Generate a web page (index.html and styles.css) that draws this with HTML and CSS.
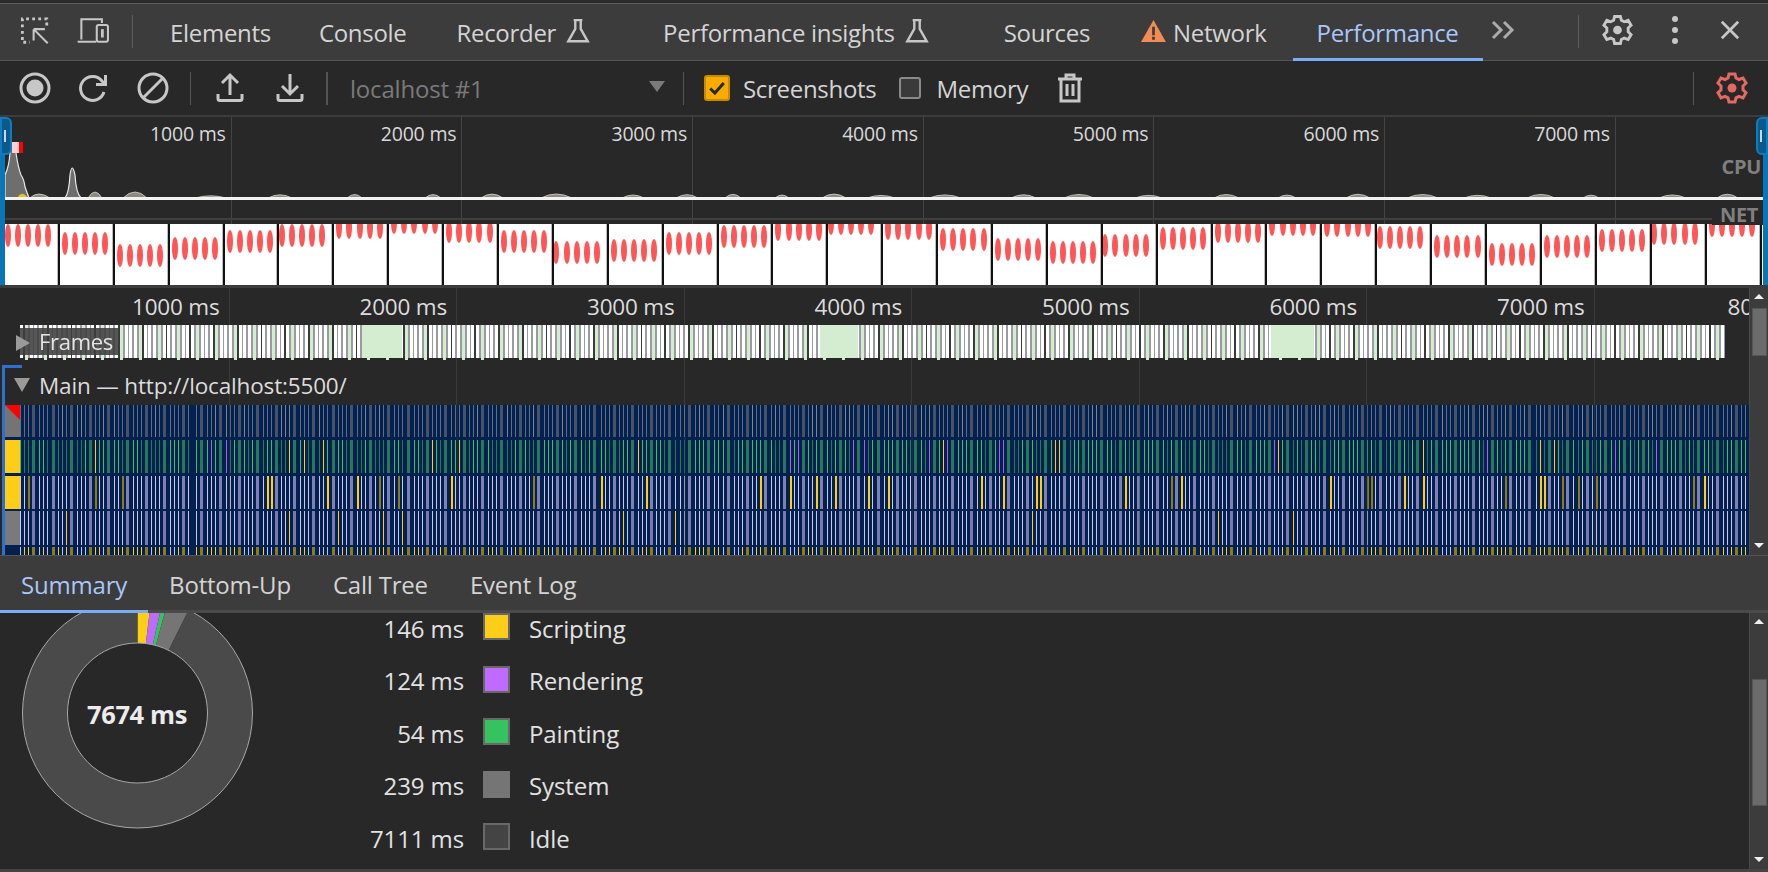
FILE: index.html
```html
<!DOCTYPE html>
<html lang="en">
<head>
<meta charset="utf-8">
<title>DevTools Performance</title>
<link rel="stylesheet" href="styles.css">
</head>
<body>
<div class="app">
  <header class="tabbar">
    <svg class="ico ico-inspect" viewBox="0 0 32 32"><path class="dash" d="M2 12V3h26v9M2 16v12h8"/><path class="ln" d="M14 14h12M14 14v12M14 14l15 15"/></svg>
    <svg class="ico ico-device" viewBox="0 0 36 30"><path class="ln" d="M5 24V2.500h22v4M1 26.500h20"/><rect class="ln" x="21.500" y="8.500" width="12" height="18" rx="2"/><path class="ln thick" d="M27.500 13v9"/></svg>
    <span class="vsep vsep-a"></span>
    <nav class="tabs">
      <span class="tab">Elements</span>
      <span class="tab tab-console">Console</span>
      <span class="tab">Recorder<svg class="flask" viewBox="0 0 24 24"><path class="ln" d="M8 2h8M9.500 2v8L3 21.500h18L14.500 10V2"/></svg></span>
      <span class="tab tab-pi">Performance insights<svg class="flask" viewBox="0 0 24 24"><path class="ln" d="M8 2h8M9.500 2v8L3 21.500h18L14.500 10V2"/></svg></span>
      <span class="tab tab-sources">Sources</span>
      <span class="tab tab-net"><svg class="warn" viewBox="0 0 28 25"><path class="warn-tri" d="M14 1L27 24H1z"/><path class="warn-bang" d="M12.600 8h2.800v9h-2.800zM12.600 18.500h2.800v3h-2.800z"/></svg>Network</span>
      <span class="tab tab-active">Performance</span>
    </nav>
    <svg class="ico ico-more" viewBox="0 0 26 20"><path class="ln thick" d="M2 2l8 8-8 8M13 2l8 8-8 8"/></svg>
    <span class="vsep vsep-b"></span>
    <svg class="ico ico-gear" viewBox="0 0 32 32"><path class="ln thick" d="M13 2h6l1 4 3 1.500 4-1.500 3 5-3 3v3.800l3 3-3 5-4-1.500-3 1.500-1 4.200h-6l-1-4.200-3-1.500-4 1.500-3-5 3-3v-3.800l-3-3 3-5 4 1.500L12 6z"/><circle class="fill-g" cx="16" cy="16" r="4.500"/></svg>
    <span class="kebab"><i></i><i></i><i></i></span>
    <svg class="ico ico-close" viewBox="0 0 22 22"><path class="ln thick" d="M2 2l18 18M20 2L2 20"/></svg>
  </header>

  <section class="toolbar">
    <svg class="tool tool-rec" viewBox="0 0 32 32"><circle class="ln thick" cx="16" cy="16" r="14"/><circle class="fill-g" cx="16" cy="16" r="8.500"/></svg>
    <svg class="tool" viewBox="0 0 32 32"><path class="ln thick" d="M26 20a12 12 0 1 1-2-11l3 3M27.500 3v9.500H18"/></svg>
    <svg class="tool" viewBox="0 0 32 32"><circle class="ln thick" cx="16" cy="16" r="14"/><path class="ln thick" d="M6.500 25.500l19-19"/></svg>
    <span class="tsep tsep-a"></span>
    <svg class="tool tool-up" viewBox="0 0 30 32"><path class="ln thick" d="M15 23V3M7 11l8-8 8 8M3 22v4.500a2 2 0 0 0 2 2h20a2 2 0 0 0 2-2V22"/></svg>
    <svg class="tool tool-down" viewBox="0 0 30 32"><path class="ln thick" d="M15 2v20M7 14l8 8 8-8M3 22v4.500a2 2 0 0 0 2 2h20a2 2 0 0 0 2-2V22"/></svg>
    <span class="tsep tsep-b"></span>
    <span class="target">localhost #1</span>
    <span class="caret"></span>
    <span class="tsep tsep-c"></span>
    <span class="check check-on"><svg viewBox="0 0 26 26"><path class="tick" d="M5 13.500l5.500 5.500L21 7"/></svg></span>
    <span class="check-label">Screenshots</span>
    <span class="check check-off"></span>
    <span class="check-label check-label-mem">Memory</span>
    <svg class="tool tool-trash" viewBox="0 0 26 30"><path class="ln thick" d="M1 6h24M9 6V2h8v4M4 6v22h18V6M10 11v12M16 11v12"/></svg>
    <span class="tsep tsep-d"></span>
    <svg class="tool tool-capture" viewBox="0 0 32 32"><path class="ln-red" d="M13 2h6l1 4 3 1.500 4-1.500 3 5-3 3v3.800l3 3-3 5-4-1.500-3 1.500-1 4.200h-6l-1-4.200-3-1.500-4 1.500-3-5 3-3v-3.800l-3-3 3-5 4 1.500L12 6z"/><circle class="fill-r" cx="16" cy="16" r="4.500"/></svg>
  </section>

  <section class="overview">
    <div class="ruler ruler-over">
      <span>1000 ms</span><span>2000 ms</span><span>3000 ms</span><span>4000 ms</span><span>5000 ms</span><span>6000 ms</span><span>7000 ms</span>
    </div>
    <svg class="cpu" viewBox="0 0 1768 90">
      <path class="cpu-fill" d="M5 81V58Q9 50 10 36Q13 20 16 36Q18 50 21 58Q24 62 25 70L29 81Z"/>
      <path class="cpu-fill" d="M65 81Q69 76 70 58Q72 44 75 58Q76 76 81 81Z"/>
      <path class="cpu-fill cpu-small" id="cpuBumps" d="M30 81Q38 73 50 81Z"/>
      <path class="cpu-yellow" d="M18 81Q22 74 27 81ZM74 81H84M36 81H44"/>
      <path class="cpu-base" d="M5 81.500H1763"/>
    </svg>
    <div class="net-line"></div>
    <div class="film" id="film"></div>
    <span class="lane-tag lane-cpu">CPU</span>
    <span class="lane-tag lane-net">NET</span>
    <span class="handle handle-l"></span>
    <span class="handle handle-r"></span>
    <span class="edge edge-l"></span>
    <span class="edge edge-r"></span>
    <span class="nav-mark"></span>
  </section>

  <section class="timeline">
    <div class="tl-main">
      <div class="ruler ruler-main">
        <span>1000 ms</span><span>2000 ms</span><span>3000 ms</span><span>4000 ms</span><span>5000 ms</span><span>6000 ms</span><span>7000 ms</span><span>8000 ms</span>
      </div>
      <div class="frames">
        <canvas id="framesCanvas" class="frames-canvas" width="1705" height="36"></canvas>
        <span class="tri tri-right"></span>
        <span class="frames-label">Frames</span>
      </div>
      <div class="main-track">
        <div class="main-head"><span class="tri tri-down"></span><span>Main — http://localhost:5500/</span></div>
        <canvas id="flameCanvas" class="flame" width="1744" height="150"></canvas>
      </div>
    </div>
    <div class="scroll scroll-tl">
      <span class="arrow arrow-up"></span>
      <span class="thumb thumb-tl"></span>
      <span class="arrow arrow-down"></span>
    </div>
  </section>

  <nav class="subtabs">
    <span class="subtab subtab-active">Summary</span>
    <span class="subtab">Bottom-Up</span>
    <span class="subtab">Call Tree</span>
    <span class="subtab">Event Log</span>
  </nav>

  <section class="summary">
    <div class="pie">
      <svg class="pie-svg" viewBox="0 0 280 256"><g id="pie"></g></svg>
      <span class="pie-total">7674 ms</span>
    </div>
    <div class="legend">
      <span class="val">146 ms</span><span class="sw sw-script"></span><span class="lab">Scripting</span>
      <span class="val">124 ms</span><span class="sw sw-render"></span><span class="lab">Rendering</span>
      <span class="val">54 ms</span><span class="sw sw-paint"></span><span class="lab">Painting</span>
      <span class="val">239 ms</span><span class="sw sw-system"></span><span class="lab">System</span>
      <span class="val">7111 ms</span><span class="sw sw-idle"></span><span class="lab">Idle</span>
    </div>
    <div class="scroll scroll-sum">
      <span class="arrow arrow-up"></span>
      <span class="thumb thumb-sum"></span>
      <span class="arrow arrow-down"></span>
    </div>
  </section>
  <div class="footer-line"></div>
</div>
<script src="chart.js"></script>
</body>
</html>
```
FILE: styles.css
```css
* { box-sizing: border-box; }
html, body { margin: 0; padding: 0; background: #282828; }
body { width: 1768px; height: 872px; overflow: hidden; font-family: "Open Sans", "Noto Sans", sans-serif; color: #d6d6d6; }
.app { width: 1768px; height: 872px; display: flex; flex-direction: column; position: relative; }

svg { display: block; flex: none; }
.ln { fill: none; stroke: #c7c7c7; stroke-width: 2.2; }
.thick { stroke-width: 3; }
.dash { fill: none; stroke: #c7c7c7; stroke-width: 3; stroke-dasharray: 3 3.500; }
.fill-g { fill: #c7c7c7; }
.ln-red { fill: none; stroke: #e46962; stroke-width: 3; }
.fill-r { fill: #e46962; }

/* top tab bar */
.tabbar { height: 61px; flex: none; display: flex; align-items: center; background: #3c3c3c; border-top: 3px solid #2b2b2b; border-bottom: 1px solid #555; box-shadow: inset 0 1px 0 #5c5c5c; padding-left: 20px; }
.ico-inspect { width: 31px; height: 30px; margin-top: -2px; }
.ico-device { width: 35px; height: 28px; margin-left: 25px; margin-top: -2px; }
.vsep { width: 1px; height: 33px; background: #5e5e5e; flex: none; }
.vsep-a { margin-left: 21px; }
.tabs { display: flex; align-self: stretch; height: 58px; margin-left: 13px; }
.tab { display: flex; align-items: center; padding: 0 24px 0; font-size: 24px; letter-spacing: -.3px; color: #d4d4d4; white-space: nowrap; height: 58px; }
.tab-console { padding-right: 26px; }
.tab-pi { padding-left: 48px; }
.tab-sources { padding-left: 50px; }
.tab-net { padding-left: 26px; padding-right: 26px; }
.flask { width: 26px; height: 26px; margin-left: 9px; margin-top: -3px; }
.warn { width: 27px; height: 24px; margin-right: 6px; margin-top: -3px; }
.warn-tri { fill: #f28b54; }
.warn-bang { fill: #3c3c3c; }
.tab-active { color: #a8c7fa; box-shadow: inset 0 -3px 0 #7cacf8; }
.ico-more { width: 26px; height: 20px; margin-left: 8px; margin-top: -3px; }
.ico-more .ln { stroke: #ababab; }
.vsep-b { margin-left: 61px; }
.ico-gear { width: 31px; height: 32px; margin-left: 23px; margin-top: -3px; }
.kebab { display: flex; flex-direction: column; gap: 5px; margin-left: 39px; margin-top: -3px; }
.kebab i { width: 6px; height: 6px; border-radius: 50%; background: #c7c7c7; display: block; }
.ico-close { width: 20px; height: 20px; margin-left: 42px; margin-top: -3px; }

/* recording toolbar */
.toolbar { height: 54px; flex: none; display: flex; align-items: center; background: #282828; padding-left: 19px; padding-right: 20px; }
.tool { width: 32px; height: 32px; margin-right: 27px; }
.tool-up { width: 30px; margin-right: 30px; }
.tool-down { width: 30px; margin-right: 0; }
.tsep { width: 1px; height: 33px; background: #555; flex: none; }
.tsep-a { margin-left: -6px; margin-right: 24px; }
.tsep-b { width: 2px; margin-left: 21px; }
.target { font-size: 24px; letter-spacing: -.2px; color: #7a7a7a; margin-left: 22px; width: 299px; white-space: nowrap; }
.caret { width: 0; height: 0; border-left: 8px solid transparent; border-right: 8px solid transparent; border-top: 11px solid #7a7a7a; margin-top: -3px; }
.tsep-c { margin-left: 18px; }
.check { width: 26px; height: 26px; flex: none; border-radius: 3px; display: block; }
.check-on { background: #f9ab00; border: 2px solid #c98a00; margin-left: 20px; }
.check-on svg { width: 22px; height: 22px; }
.tick { fill: none; stroke: #282828; stroke-width: 3.500; }
.check-off { width: 22px; height: 22px; border: 2px solid #8a8a8a; background: #3a3a3a; margin-left: 23px; }
.check-label { font-size: 24px; letter-spacing: -.3px; color: #d4d4d4; margin-left: 13px; white-space: nowrap; }
.check-label-mem { margin-left: 15px; }
.tool-trash { width: 26px; height: 30px; margin-left: 29px; margin-right: 0; }
.tsep-d { margin-left: auto; }
.tool-capture { margin-left: 22px; margin-right: 0; }

/* overview */
.overview { height: 173px; flex: none; position: relative; background: #282828; border-top: 2px solid #3c3c3c; border-bottom: 3px solid #3c3c3c; }
.cpu { position: absolute; left: 0; top: 0; width: 1768px; height: 90px; }
.cpu-fill { fill: #6e6e6e; stroke: #e8e8e8; stroke-width: 1.200; }
.cpu-small { fill: #8a8a80; stroke: #d8d8d0; stroke-width: .8; }
.cpu-yellow { fill: #e8c020; stroke: #e8c020; stroke-width: 1.500; }
.cpu-base { fill: none; stroke: #f2f2f2; stroke-width: 3; }
.ruler { display: flex; position: absolute; left: 0; top: 0; bottom: 0; right: 0; pointer-events: none; }
.ruler span { flex: none; text-align: right; white-space: nowrap; border-right: 1px solid #444; }
.ruler-over span { width: 230.700px; padding-right: 5px; padding-top: 3px; font-size: 19.500px; letter-spacing: -.2px; color: #d8d8d8; }
.ruler-over span:first-child { width: 231.700px; }
.net-line { position: absolute; left: 5px; right: 56px; top: 101px; height: 2px; background: #3f3f3f; }
.film { position: absolute; left: 5px; right: 0; top: 107px; height: 61px; display: flex; gap: 2px; overflow: hidden; background: #111; }
.shot { width: 52.900px; height: 61px; flex: none; position: relative; background: #fff; border-right: 1px solid #bbb; overflow: hidden; }
.blob { position: absolute; width: 6px; height: 23px; border-radius: 50%; background: #ff5555; }
.lane-tag { position: absolute; right: 7px; font-weight: 700; font-size: 20px; color: #7f7f7f; line-height: 24px; letter-spacing: -.3px; }
.lane-cpu { top: 38px; }
.lane-net { top: 86px; background: #282828; height: 22px; left: 1712px; right: 0; padding-left: 8px; }
.handle { position: absolute; top: 0; width: 12px; height: 38px; background: #0c5a8c; border: 2px solid #0b7dc0; }
.handle::after { content: ""; position: absolute; top: 11px; left: 2px; width: 2px; height: 12px; background: #c8d8ea; }
.handle-l { left: 0; border-radius: 0 6px 6px 0; }
.handle-r { right: 0; border-radius: 6px 0 0 6px; }
.edge { position: absolute; top: 38px; bottom: 0; width: 5px; background: #0a76b8; }
.edge-l { left: 0; }
.edge-r { right: 0; }
.nav-mark { position: absolute; left: 12px; top: 25px; width: 11px; height: 11px; background: linear-gradient(90deg, #ffd0d0 0 7px, #f00 7px); }

/* timeline */
.timeline { height: 267px; flex: none; display: flex; background: #282828; }
.tl-main { flex: 1; min-width: 0; display: flex; flex-direction: column; position: relative; overflow: hidden; }
.ruler-main span { width: 227.500px; padding-right: 9px; padding-top: 3px; font-size: 22.500px; letter-spacing: -.2px; color: #dcdcdc; border-right: 1px solid #3a3a3a; }
.ruler-main span:first-child { width: 229.500px; }
.ruler-main span:last-child { width: 200px; border-right: 0; text-align: left; padding-left: 133px; }
.frames { margin-top: 37px; margin-left: 20px; height: 36px; position: relative; flex: none; }
.frames-canvas { display: block; }
.frames-label { position: absolute; left: 0; top: 3px; width: 98px; height: 27px; background: rgba(62, 62, 62, .88); color: #e4e4e4; font-size: 22px; letter-spacing: -.3px; line-height: 27px; padding-left: 19px; }
.tri { width: 0; height: 0; display: block; flex: none; }
.tri-right { position: absolute; left: -4px; top: 10px; z-index: 1; border-top: 8px solid transparent; border-bottom: 8px solid transparent; border-left: 14px solid #9a9a9a; }
.tri-down { border-left: 8px solid transparent; border-right: 8px solid transparent; border-top: 14px solid #9a9a9a; }
.main-track { margin-top: 4px; margin-left: 2px; flex: 1; border-left: 3px solid #2f6fd0; position: relative; }
.main-track::before { content: ""; position: absolute; left: -3px; top: 0; width: 20px; height: 3px; background: #2f6fd0; }
.main-head { height: 40px; display: flex; align-items: center; gap: 9px; padding-left: 9px; font-size: 22.500px; letter-spacing: -.16px; color: #dcdcdc; }
.flame { display: block; }

.scroll { width: 19px; flex: none; background: #3c3c3c; position: relative; display: block; border-left: 1px solid #4a4a4a; }
.thumb { position: absolute; left: 2px; right: 1px; background: #6b6b6b; border: 1px solid #555; }
.arrow { position: absolute; left: 4px; width: 0; height: 0; border-left: 5px solid transparent; border-right: 5px solid transparent; }
.arrow-up { top: 6px; border-bottom: 5px solid #f0f0f0; }
.arrow-down { bottom: 7px; border-top: 5px solid #f0f0f0; }
.thumb-tl { top: 20px; height: 48px; }
.thumb-sum { top: 66px; height: 127px; }

/* sub tabs */
.subtabs { height: 58px; flex: none; display: flex; background: #3c3c3c; border-top: 1px solid #555; box-shadow: inset 0 -3px 0 #4a4a4a; }
.subtab { padding: 0 21px 0; display: flex; align-items: center; font-size: 24px; letter-spacing: -.2px; color: #d4d4d4; height: 57px; }
.subtab-active { color: #a8c7fa; box-shadow: inset 0 -3px 0 #7cacf8; }

/* summary */
.summary { height: 256px; flex: none; display: flex; background: #282828; position: relative; }
.pie { width: 300px; height: 256px; flex: none; position: relative; }
.pie-svg { width: 280px; height: 256px; }
.pie-total { position: absolute; left: 37px; width: 200px; top: 84px; text-align: center; font-weight: 700; font-size: 25.500px; letter-spacing: -.4px; color: #ececec; line-height: 34px; }
.legend { width: 1449px; flex: none; display: grid; grid-template-columns: 164px 27px auto; column-gap: 19px; row-gap: 25.500px; grid-auto-rows: 27px; align-items: center; align-content: start; font-size: 24px; letter-spacing: -.1px; color: #e2e2e2; }
.val { text-align: right; padding-top: 3px; white-space: nowrap; line-height: 27px; }
.lab { padding-top: 3px; line-height: 27px; }
.sw { width: 27px; height: 27px; display: block; border: 2px solid #686868; }
.sw-script { background: #fdcd17; }
.sw-render { background: #c06bff; }
.sw-paint { background: #34c35e; }
.sw-system { background: #757575; border-color: #757575; }
.sw-idle { background: #444; }
.scroll-sum { height: 256px; }
.footer-line { height: 3px; flex: none; background: #444; }
```
FILE: chart.js
```js
(function () {
  var seed = 12345;
  function rnd() { seed = (seed * 1664525 + 1013904223) >>> 0; return seed / 4294967296; }

  /* cpu bumps */
  var bumps = 'M30 81Q38 73 50 81Z', bx = 88;
  while (bx < 1750) {
    var bw = 14 + rnd() * 18, bh = bx < 160 ? 6 : 2 + rnd() * 2;
    bumps += 'M' + bx.toFixed(0) + ' 81Q' + (bx + bw / 2).toFixed(0) + ' ' + (81 - bh * 2).toFixed(1) + ' ' + (bx + bw).toFixed(0) + ' 81Z';
    bx += bw + 20 + rnd() * 45;
  }
  document.getElementById('cpuBumps').setAttribute('d', bumps);

  /* filmstrip */
  var film = document.getElementById('film');
  var tops = [235, 244, 256, 248, 241, 234, 226, 222];
  for (var i = 0; i < 33; i++) {
    var f = (i * 0.97) % 8, a = Math.floor(f), b = (a + 1) % 8, t = f - a;
    var c = tops[a] * (1 - t) + tops[b] * t;
    var shot = document.createElement('div');
    shot.className = 'shot';
    var off = i % 5 === 0 ? 2.5 : 5;
    for (var k = 0; k < 5; k++) {
      var blob = document.createElement('span');
      blob.className = 'blob';
      blob.style.left = (off + k * 10.1 - 3) + 'px';
      blob.style.top = (c - 224 - 11.5) + 'px';
      shot.appendChild(blob);
    }
    film.appendChild(shot);
  }

  /* frames lane */
  var fc = document.getElementById('framesCanvas').getContext('2d');
  var n = 0;
  for (var fx = 0; fx < 1705; fx += 4.75, n++) {
    var rx = Math.round(fx);
    fc.fillStyle = n % 5 === 0 ? '#3a3a3a' : '#9a9aa2';
    fc.fillRect(rx + 3, 0, 2, 33);
    var green = n % 4 === 1;
    fc.fillStyle = green ? '#d4ecd0' : '#ffffff';
    fc.fillRect(rx, 0, 3, green ? 35 : 33);
  }
  [[342, 40], [800, 38], [1251, 43]].forEach(function (g) {
    fc.fillStyle = '#d4ecd0'; fc.fillRect(g[0], 0, g[1], 33);
  });

  /* flame chart */
  var cv = document.getElementById('flameCanvas');
  var g = cv.getContext('2d');
  g.fillStyle = '#04204f'; g.fillRect(0, 0, 1744, 150);
  var rows = [[0, 32], [35, 33], [71, 33], [106, 34], [142, 8]];
  function bar(r, px, w, col) { g.fillStyle = col; g.fillRect(Math.round(px), rows[r][0], w, rows[r][1]); }
  function stripe(px, wide) {
    if (px > 186 && px < 191) return;
    var w = wide ? 3 : 1;
    var y1 = rnd(), y2 = rnd();
    bar(0, px, w, wide ? '#465268' : (rnd() < 0.25 ? '#80858c' : '#5f6e80'));
    bar(1, px, w, wide ? '#23795a' : (y1 < 0.04 ? '#fdcd17' : (y1 < 0.09 ? '#a860f0' : (rnd() < 0.6 ? '#2ec862' : '#1f8055'))));
    bar(2, px, y2 < 0.14 && !wide ? 2 : w, wide ? '#7c80b4' : (y2 < 0.09 ? '#fdcd17' : (y2 < 0.14 ? '#8c7c18' : '#c8c6f0')));
    bar(3, px, w, wide ? '#767ab0' : (y2 > 0.97 ? '#fdcd17' : '#c8c6f0'));
    bar(4, px, wide ? 3 : 1, wide ? '#8c7c18' : (rnd() < 0.5 ? '#fdcd17' : '#c0c0e8'));
  }
  var p = 15, s = 0;
  while (p < 1744) {
    var wideBar = s % 4 === 3;
    stripe(p, wideBar);
    p += wideBar ? 6.6 : 4;
    if (rnd() < 0.03) p += 1;
    s++;
  }
  g.fillStyle = '#747474'; g.fillRect(0, 0, 15, 32);
  g.fillStyle = '#f00'; g.beginPath(); g.moveTo(0, 0); g.lineTo(15, 0); g.lineTo(15, 15); g.closePath(); g.fill();
  g.fillStyle = '#fdcd17'; g.fillRect(0, 35, 15, 33); g.fillRect(0, 71, 15, 33);
  g.fillStyle = '#7a7a7a'; g.fillRect(0, 106, 15, 34);
  g.fillStyle = 'rgba(60,60,60,.35)';
  for (var gx = 0; gx < 8; gx++) { g.fillRect(224 + gx * 227.5, 0, 1.5, 150); }

  /* donut */
  var parts = [[146, '#fdcd17'], [124, '#c06bff'], [54, '#34c35e'], [239, '#757575'], [7111, '#4a4a4a']];
  var cx = 137.5, cy = 100, R = 115, r0 = 70, total = 7674, ang = 0;
  var pie = document.getElementById('pie');
  var ns = 'http://www.w3.org/2000/svg';
  function pt(rad, an) { return (cx + rad * Math.sin(an)).toFixed(2) + ' ' + (cy - rad * Math.cos(an)).toFixed(2); }
  parts.forEach(function (q) {
    var d = q[0] / total * Math.PI * 2, e = ang + d, big = d > Math.PI ? 1 : 0;
    var el = document.createElementNS(ns, 'path');
    el.setAttribute('d', 'M' + pt(R, ang) + 'A' + R + ' ' + R + ' 0 ' + big + ' 1 ' + pt(R, e) + 'L' + pt(r0, e) + 'A' + r0 + ' ' + r0 + ' 0 ' + big + ' 0 ' + pt(r0, ang) + 'Z');
    el.setAttribute('fill', q[1]);
    pie.appendChild(el);
    ang = e;
  });
  [R, r0].forEach(function (rad) {
    var c = document.createElementNS(ns, 'circle');
    c.setAttribute('cx', cx); c.setAttribute('cy', cy); c.setAttribute('r', rad);
    c.setAttribute('fill', 'none'); c.setAttribute('stroke', '#a8a8a8'); c.setAttribute('stroke-width', '1');
    pie.appendChild(c);
  });
})();
```
